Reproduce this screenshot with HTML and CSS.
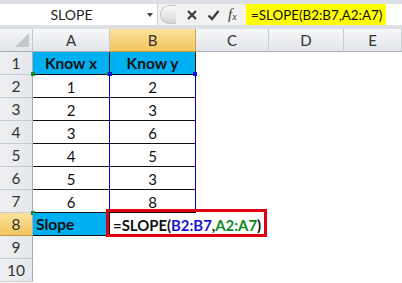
FILE: index.html
```html
<!DOCTYPE html>
<html>
<head>
<meta charset="utf-8">
<link rel="stylesheet" href="styles.css">
</head>
<body>
<div class="app">
  <div class="fbar">
    <div class="fbar-row">
      <div class="namebox">
        <span class="name">SLOPE</span>
        <span class="drop"></span>
      </div>
      <div class="mid">
        <span class="handle"></span>
        <svg class="ico" width="12" height="12" viewBox="0 0 12 12"><path d="M2 2 L10 10 M10 2 L2 10" stroke="#3a3a3a" stroke-width="2.2" fill="none"/></svg>
        <svg class="ico" width="13" height="12" viewBox="0 0 13 12"><path d="M1.5 6.5 L5 10 L11.5 2" stroke="#3a3a3a" stroke-width="2.2" fill="none"/></svg>
        <span class="fx">f<sub>x</sub></span>
      </div>
      <div class="finput"><span class="hl">=SLOPE(B2:B7,A2:A7)</span></div>
    </div>
  </div>
  <div class="sheet">
    <div class="corner"><span class="tri"></span></div>
    <div class="ch">A</div>
    <div class="ch sel">B</div>
    <div class="ch">C</div>
    <div class="ch">D</div>
    <div class="ch">E</div>

    <div class="rh">1</div>
    <div class="c t hd">Know x</div>
    <div class="c t hd">Know y</div>
    <div class="c"></div><div class="c"></div><div class="c"></div>

    <div class="rh">2</div>
    <div class="c t bl num">1<span class="mk g tl"></span><span class="mk g tr"></span></div>
    <div class="c t bl num">2<span class="mk b tl"></span><span class="mk b tr"></span></div>
    <div class="c"></div><div class="c"></div><div class="c"></div>

    <div class="rh">3</div>
    <div class="c t bl num">2</div>
    <div class="c t bl num">3</div>
    <div class="c"></div><div class="c"></div><div class="c"></div>

    <div class="rh">4</div>
    <div class="c t bl num">3</div>
    <div class="c t bl num">6</div>
    <div class="c"></div><div class="c"></div><div class="c"></div>

    <div class="rh">5</div>
    <div class="c t bl num">4</div>
    <div class="c t bl num">5</div>
    <div class="c"></div><div class="c"></div><div class="c"></div>

    <div class="rh">6</div>
    <div class="c t bl num">5</div>
    <div class="c t bl num">3</div>
    <div class="c"></div><div class="c"></div><div class="c"></div>

    <div class="rh">7</div>
    <div class="c t bl num">6<span class="mk g bl-mk"></span></div>
    <div class="c t bl num">8</div>
    <div class="c"></div><div class="c"></div><div class="c"></div>

    <div class="rh sel">8</div>
    <div class="c t hd slope">Slope</div>
    <div class="c formula"><span class="ftext">=SLOPE(<span class="rb">B2:B7</span>,<span class="rg">A2:A7</span>)</span><span class="redbox"></span></div>
    <div class="c"></div><div class="c"></div><div class="c"></div>

    <div class="rh">9</div>
    <div class="c"></div><div class="c"></div><div class="c"></div><div class="c"></div><div class="c"></div>

    <div class="rh">10</div>
    <div class="c"></div><div class="c"></div><div class="c"></div><div class="c"></div><div class="c"></div>
  </div>
</div>
</body>
</html>
```
FILE: styles.css
```css
* { box-sizing: border-box; }
html, body { margin: 0; padding: 0; background: #fff; }
body { font-family: Lato, "Open Sans", "Liberation Sans", sans-serif; width: 402px; height: 283px; overflow: hidden; }

.fbar {
  height: 29px;
  background: #dcdfe3;
  padding: 4px 0 4px 0;
}
.fbar-row {
  display: flex;
  height: 21px;
  background: #f2f2f2;
}
.namebox {
  width: 158px;
  background: #fff;
  border-right: 1px solid #d0d0d0;
  position: relative;
  display: flex;
  align-items: center;
  justify-content: center;
}
.name { font-size: 14px; color: #222; margin-left: -14px; }
.drop {
  position: absolute;
  right: 4px; top: 9px;
  width: 0; height: 0;
  border-left: 3.5px solid transparent;
  border-right: 3.5px solid transparent;
  border-top: 4px solid #444;
}
.mid {
  width: 88px;
  display: flex;
  align-items: center;
}
.handle {
  width: 16px; height: 19px;
  margin-left: 2px;
  border-radius: 10px 0 0 10px;
  background: linear-gradient(#fafafa, #d6d6d6);
  border: 1px solid #c4c4c4;
  border-right: none;
}
.mid .ico:nth-of-type(1) { margin-left: 10px; }
.mid .ico:nth-of-type(2) { margin-left: 9px; }
.fx {
  font-family: "Liberation Serif", serif;
  font-style: italic;
  font-size: 15px;
  color: #3a3a3a;
  margin-left: 8px;
  line-height: 1;
}
.fx sub { font-size: 10px; vertical-align: -1px; }
.finput {
  flex: 1;
  background: #fff;
  display: flex;
  align-items: stretch;
}
.hl {
  background: #ffff00;
  font-size: 13.4px;
  color: #111;
  padding: 0 4px 0 5px;
  display: flex;
  align-items: center;
}

.sheet {
  display: grid;
  grid-template-columns: 33px 77px 86px 73px 75px 1fr;
  grid-template-rows: repeat(11, 23px);
  position: relative;
}
.corner {
  background: linear-gradient(#f4f5f7, #e2e5e9);
  border-right: 1px solid #c3c7cc;
  border-bottom: 1px solid #a8adb4;
  position: relative;
}
.tri {
  position: absolute;
  right: 3px; bottom: 4px;
  width: 0; height: 0;
  border-left: 14px solid transparent;
  border-bottom: 14px solid #c4c8cd;
}
.ch {
  background: linear-gradient(#f6f7f9, #e3e6ea);
  border-right: 1px solid #c8ccd1;
  border-bottom: 1px solid #a8adb4;
  display: flex; align-items: center; justify-content: center;
  font-size: 15px; color: #333;
}
.ch.sel { background: linear-gradient(#fbe29f, #f3c55e); border-right-color: #c9a34e; border-bottom-color: #c29a43; }
.rh {
  background: linear-gradient(90deg, #eef0f3, #e4e7eb);
  border-right: 1px solid #a8adb4;
  border-bottom: 1px solid #c8ccd1;
  display: flex; align-items: center; justify-content: center;
  font-size: 15.5px; color: #333;
}
.rh.sel { background: linear-gradient(#fbe29f, #f3c55e); border-bottom-color: #c29a43; }
.c {
  position: relative;
  display: flex; align-items: center; justify-content: center;
  font-size: 15px; color: #111;
  white-space: nowrap;
}
.c.t { border-right: 1px solid #111; border-bottom: 1px solid #111; }
.c.bl { border-right-color: #0000c8; }
.hd { background: #00b0f0; font-weight: bold; font-size: 15.5px; }
.slope { justify-content: flex-start; padding-left: 3px; }
.num { padding-top: 1px; }
.formula {
  justify-content: flex-start;
  z-index: 2;
}
.ftext {
  font-weight: bold;
  font-size: 14.9px;
  padding-left: 3px;
  color: #111;
  position: relative;
  z-index: 2;
}
.rb { color: #1515d0; }
.rg { color: #0a8a1e; }
.redbox {
  position: absolute;
  left: -4px; top: -4px;
  width: 161px; height: 28px;
  border: 3px solid #e00010;
}
.mk { position: absolute; width: 4px; height: 4px; }
.mk.g { background: #1a8a2a; }
.mk.b { background: #1010d0; }
.mk.tl { left: -2px; top: -3px; }
.mk.tr { right: -2px; top: -3px; }
.mk.bl-mk { left: -2px; bottom: -3px; }
```
